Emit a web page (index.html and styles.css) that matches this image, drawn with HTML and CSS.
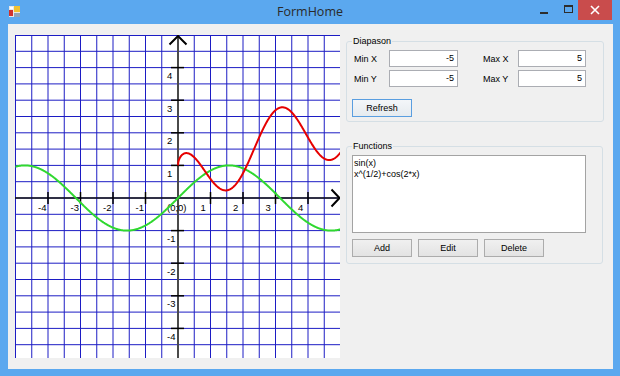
FILE: index.html
```html
<!DOCTYPE html>
<html>
<head>
<meta charset="utf-8">
<title>FormHome</title>
<link rel="stylesheet" href="styles.css">
</head>
<body>
<div class="window">
  <div class="titlebar">
    <div class="tb-left">
      <svg class="app-icon" width="11" height="11" viewBox="0 0 11 11">
        <rect x="0" y="0" width="11" height="11" fill="#e8e8e8"/>
        <rect x="5" y="0" width="6" height="6" fill="#f1c232"/>
        <rect x="0" y="4" width="4" height="6" fill="#d0312d"/>
        <rect x="5" y="7" width="6" height="4" fill="#8fa3b8"/>
        <rect x="1" y="1" width="3" height="2" fill="#ffffff"/>
      </svg>
    </div>
    <div class="title">FormHome</div>
    <div class="controls">
      <div class="cbtn cmin"><span class="min-glyph"></span></div>
      <div class="cbtn cmax"><span class="max-glyph"></span></div>
      <div class="cbtn cclose">
        <svg width="10" height="10" viewBox="0 0 10 10"><path d="M1 1 L9 9 M9 1 L1 9" stroke="#fff" stroke-width="1.6" fill="none"/></svg>
      </div>
    </div>
  </div>
  <div class="client">
    <div class="plot">
      <svg id="plot" width="325" height="323" viewBox="0 0 325 323"></svg>
    </div>
    <div class="side">
      <div class="group diapason">
        <span class="gtitle">Diapason</span>
        <div class="range-grid">
          <span class="lbl">Min X</span>
          <div class="tb">-5</div>
          <span class="lbl lbl-max">Max X</span>
          <div class="tb">5</div>
          <span class="lbl">Min Y</span>
          <div class="tb">-5</div>
          <span class="lbl lbl-max">Max Y</span>
          <div class="tb">5</div>
        </div>
        <button class="btn btn-default">Refresh</button>
      </div>
      <div class="group functions">
        <span class="gtitle">Functions</span>
        <div class="listbox">
          <div class="item">sin(x)</div>
          <div class="item">x^(1/2)+cos(2*x)</div>
        </div>
        <div class="btn-row">
          <button class="btn">Add</button>
          <button class="btn">Edit</button>
          <button class="btn">Delete</button>
        </div>
      </div>
    </div>
  </div>
</div>
<script src="script.js"></script>
</body>
</html>
```
FILE: styles.css
```css
html, body {
  margin: 0;
  padding: 0;
}
body {
  width: 620px;
  height: 376px;
  overflow: hidden;
  font-family: "Liberation Sans", Arial, sans-serif;
  font-size: 9px;
  color: #000;
}
.window {
  width: 620px;
  height: 376px;
  background: #5ba8ef;
  display: flex;
  flex-direction: column;
  box-sizing: border-box;
}
.titlebar {
  height: 24px;
  flex: none;
  display: grid;
  grid-template-columns: 1fr auto 1fr;
  align-items: start;
}
.tb-left {
  display: flex;
}
.app-icon {
  margin: 6px 0 0 9px;
  display: block;
}
.title {
  font-family: "Open Sans", "Noto Sans", sans-serif;
  font-size: 12.5px;
  line-height: 23px;
  color: #2a2a2a;
}
.controls {
  justify-self: end;
  display: flex;
  margin-right: 8px;
}
.cbtn {
  height: 20px;
  display: flex;
  justify-content: center;
  align-items: flex-start;
  box-sizing: border-box;
}
.cmin {
  width: 28px;
  padding-top: 12px;
}
.min-glyph {
  width: 8px;
  height: 2px;
  background: #2d2d2d;
}
.cmax {
  width: 20px;
  padding-top: 5px;
}
.max-glyph {
  width: 9px;
  height: 8px;
  box-sizing: border-box;
  border: 1px solid #2d2d2d;
  border-top-width: 2px;
}
.cclose {
  width: 34px;
  background: #c94c4c;
  align-items: center;
}
.cclose svg {
  display: block;
}
.client {
  flex: none;
  margin: 0 7px 0 8px;
  height: 345px;
  background: #f0f0f0;
  box-sizing: border-box;
  padding: 11px 0 0 7px;
  display: flex;
  align-items: flex-start;
}
.plot {
  width: 325px;
  height: 323px;
  flex: none;
  background: #fff;
}
.plot svg {
  display: block;
  font-family: "Liberation Sans", Arial, sans-serif;
}
.side {
  margin-left: 6px;
  padding-top: 6px;
  width: 258px;
  display: flex;
  flex-direction: column;
  gap: 24px;
}
.group {
  position: relative;
  border: 1px solid #d5dfe5;
  border-radius: 3px;
  padding: 8px 5px 4px;
}
.functions {
  padding-bottom: 6px;
  width: 257px;
  box-sizing: border-box;
}
.gtitle {
  position: absolute;
  top: -7px;
  left: 5px;
  padding: 0 1px;
  background: #f0f0f0;
  font-size: 9px;
  line-height: 12px;
}
.range-grid {
  display: grid;
  grid-template-columns: 37px 69px 60px 68px;
  grid-auto-rows: 17px;
  row-gap: 3px;
  align-items: center;
}
.lbl {
  padding-left: 2px;
  white-space: nowrap;
}
.lbl-max {
  padding-left: 25px;
}
.tb {
  height: 17px;
  box-sizing: border-box;
  border: 1px solid #abadb3;
  background: #fff;
  text-align: right;
  padding-right: 3px;
  line-height: 15px;
}
.btn {
  display: block;
  width: 60px;
  height: 18px;
  margin: 0;
  padding: 0;
  box-sizing: border-box;
  border: 1px solid #acacac;
  border-radius: 0;
  background: linear-gradient(#f0f0f0, #e3e3e3);
  font-family: "Liberation Sans", Arial, sans-serif;
  font-size: 9px;
  color: #000;
}
.btn-default {
  margin-top: 12px;
  border-color: #5a9ee0;
  background: linear-gradient(#f3f6f9, #e6ebef);
}
.listbox {
  width: 234px;
  height: 78px;
  box-sizing: border-box;
  border: 1px solid #a3a3a3;
  background: #fff;
  padding: 2px 1px;
}
.item {
  line-height: 11px;
  white-space: nowrap;
}
.btn-row {
  margin-top: 6px;
  display: flex;
  gap: 6px;
}
```
FILE: script.js
```js
(function () {
  var NS = 'http://www.w3.org/2000/svg';
  var svg = document.getElementById('plot');
  var W = 325, H = 323, ox = 163, oy = 163, sx = 32.5, sy = 32.6;

  function el(name, attrs, text) {
    var e = document.createElementNS(NS, name);
    for (var k in attrs) e.setAttribute(k, attrs[k]);
    if (text !== undefined) e.textContent = text;
    svg.appendChild(e);
    return e;
  }

  var gridColor = '#1c1cc4';
  var k, x, y;
  for (k = -10; k <= 10; k++) {
    x = ox + k * sx / 2;
    if (x < 0.5) x = 0.5;
    el('line', { x1: x, y1: 0, x2: x, y2: H, stroke: gridColor, 'stroke-width': 1 });
  }
  for (k = -10; k <= 10; k++) {
    y = oy + k * sy / 2;
    if (y < 0.5) y = 0.5;
    el('line', { x1: 0, y1: y, x2: W, y2: y, stroke: gridColor, 'stroke-width': 1 });
  }

  // axes
  el('line', { x1: ox, y1: 0, x2: ox, y2: H, stroke: '#4a4a4a', 'stroke-width': 2 });
  el('line', { x1: 0, y1: oy, x2: W, y2: oy, stroke: '#111', 'stroke-width': 1.5 });
  el('polyline', { points: '154.5,9.5 163,1 171.5,9.5', fill: 'none', stroke: '#000', 'stroke-width': 2 });
  el('polyline', { points: '316.5,154.5 324.5,163 316.5,171.5', fill: 'none', stroke: '#000', 'stroke-width': 2 });

  // ticks and labels
  for (k = -4; k <= 4; k++) {
    if (k === 0) continue;
    var ty = oy - k * sy;
    el('line', { x1: 156, y1: ty, x2: 169, y2: ty, stroke: '#000', 'stroke-width': 1.5 });
    el('text', { x: 152, y: ty + 11.5, 'font-size': 9.5, fill: '#000' }, String(k));
    var tx = ox + k * sx;
    el('line', { x1: tx, y1: 157, x2: tx, y2: 169, stroke: '#000', 'stroke-width': 1.5 });
    el('text', { x: tx - 10, y: 175.5, 'font-size': 9.5, fill: '#000' }, String(k));
  }
  el('text', { x: 152, y: 175.5, 'font-size': 9.5, fill: '#000' }, '(0;0)');

  function curve(f, a, b, color) {
    var pts = [];
    for (var t = a; t <= b + 1e-9; t += 0.01) {
      var v = f(t);
      pts.push((ox + t * sx).toFixed(2) + ',' + (oy - v * sy).toFixed(2));
    }
    el('polyline', { points: pts.join(' '), fill: 'none', stroke: color, 'stroke-width': 2, 'stroke-linejoin': 'round' });
  }
  curve(function (t) { return Math.sin(t); }, -5, 5, '#2fd82f');
  curve(function (t) { return Math.sqrt(t) + Math.cos(2 * t); }, 0, 5, '#e60000');
})();
```
